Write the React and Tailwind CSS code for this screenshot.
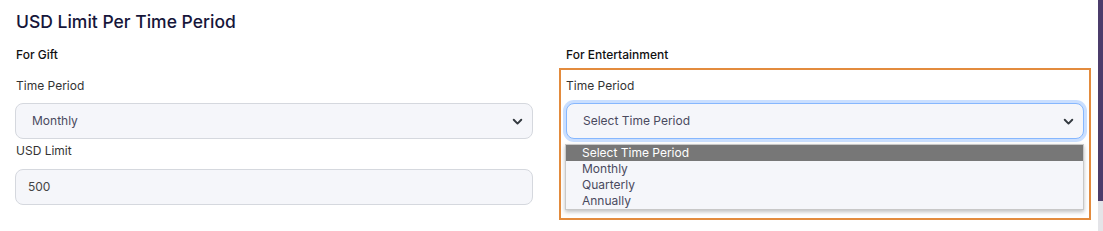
import React from 'react';

const Chevron = () => (
  <svg width="11" height="11" viewBox="0 0 16 16" className="shrink-0">
    <path d="M2.5 5.5l5.5 5.5 5.5-5.5" fill="none" stroke="#343a40" strokeWidth="2.8" strokeLinecap="round" strokeLinejoin="round" />
  </svg>
);

const FakeSelect = ({ value, focused }) => (
  <div
    className={`h-9 flex items-center justify-between pl-4 pr-[9px] rounded-lg bg-[#f5f6fa] text-[12px] text-[#4a4a5e] border ${
      focused ? 'border-[#86b7fe] shadow-[0_0_0_3px_rgba(13,110,253,0.22)]' : 'border-[#d5d8de]'
    }`}
  >
    <span>{value}</span>
    <Chevron />
  </div>
);

const options = ['Select Time Period', 'Monthly', 'Quarterly', 'Annually'];

const App = () => {
  return (
    <div className="flex w-[1103px] h-[231px] bg-white overflow-hidden" style={{ fontFamily: 'Inter, "Noto Sans", sans-serif' }}>
      <div className="w-[1098px] px-[15px]">
        {/* Header */}
        <h2 className="pt-[8px] h-[46px] text-[17.5px] leading-[27px] font-medium text-[#16163a] pl-px">
          USD Limit Per Time Period
        </h2>

        <div className="grid grid-cols-2 gap-[33px] w-[1069px]">
          {/* Gift */}
          <div>
            <p className="h-[18px] leading-[18px] text-[12px] font-medium text-[#111] pl-px">For Gift</p>
            <p className="mt-[13px] h-[18px] leading-[18px] text-[12px] text-[#333] pl-px">Time Period</p>
            <div className="mt-[8px]">
              <FakeSelect value="Monthly" />
            </div>
            <p className="mt-[3px] h-[18px] leading-[18px] text-[12px] text-[#333] pl-px">USD Limit</p>
            <div className="mt-[9px] h-9 flex items-center px-3 rounded-lg bg-[#f5f6fa] border border-[#d5d8de] text-[12px] text-[#444]">
              500
            </div>
          </div>

          {/* Entertainment */}
          <div>
            <p className="h-[18px] leading-[18px] text-[12px] font-medium text-[#111]">For Entertainment</p>
            <div className="mt-[4px] -mx-[7px] border-2 border-[#e38b3d] px-[5px] pt-[7px] pb-[8px]">
              <p className="h-[18px] leading-[18px] text-[12px] text-[#333]">Time Period</p>
              <div className="mt-[8px]">
                <FakeSelect value="Select Time Period" focused />
              </div>
              {/* Open dropdown list */}
              <div className="mt-[5px] -ml-px border border-[#c8c8c8] bg-[#f5f6fa] shadow-[0_2px_4px_rgba(0,0,0,0.25)]">
                {options.map((o, i) => (
                  <div
                    key={o}
                    className={`h-4 leading-4 pl-4 text-[12px] ${i === 0 ? 'bg-[#777777] text-white' : 'text-[#4a4a5e]'}`}
                  >
                    {o}
                  </div>
                ))}
              </div>
            </div>
          </div>
        </div>
      </div>

      {/* Right edge strip */}
      <div className="w-[5px] flex flex-col">
        <div className="h-[201px] bg-[#4b3c6b]" />
        <div className="flex-1 bg-[#e4e4e8]" />
      </div>
    </div>
  );
};

export default App;
